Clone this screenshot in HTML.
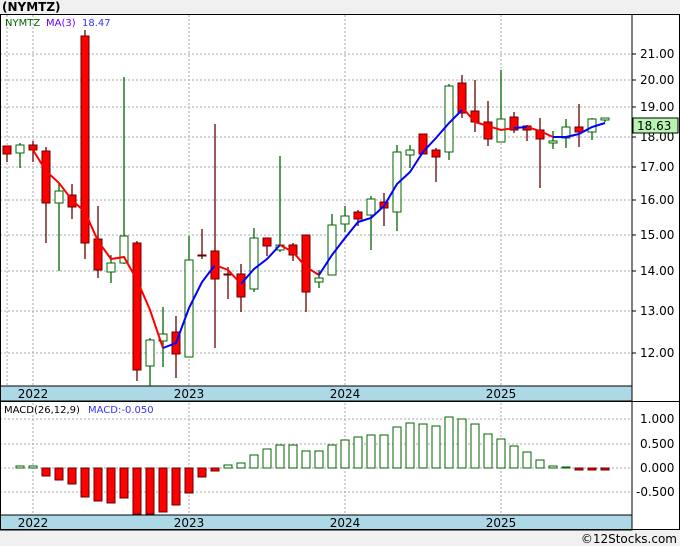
<!DOCTYPE html><html><head><style>
body{margin:0;width:680px;height:546px;background:#fff;font-family:"DejaVu Sans","Liberation Sans",sans-serif;overflow:hidden}
</style></head><body>
<svg width="680" height="546" xmlns="http://www.w3.org/2000/svg" font-family="DejaVu Sans, Liberation Sans, sans-serif">
<rect x="0" y="0" width="680" height="546" fill="#fff"/>
<rect x="0" y="0" width="680" height="14" fill="#f0f0f0"/>
<text x="2" y="11" font-size="12" font-weight="bold" fill="#000">(NYMTZ)</text>
<rect x="0" y="530" width="680" height="16" fill="#f0f0f0"/>
<text x="677" y="543" font-size="12" text-anchor="end" fill="#000">©12Stocks.com</text>
<!-- grids -->
<g stroke="#aaa" stroke-dasharray="2,2" stroke-width="1">
<line x1="0" x2="632" y1="54" y2="54"/><line x1="0" x2="632" y1="80" y2="80"/><line x1="0" x2="632" y1="107" y2="107"/><line x1="0" x2="632" y1="137" y2="137"/><line x1="0" x2="632" y1="167" y2="167"/><line x1="0" x2="632" y1="200" y2="200"/><line x1="0" x2="632" y1="235" y2="235"/><line x1="0" x2="632" y1="271" y2="271"/><line x1="0" x2="632" y1="311" y2="311"/><line x1="0" x2="632" y1="353" y2="353"/>
<line x1="7" x2="7" y1="15" y2="386"/><line x1="33" x2="33" y1="15" y2="386"/><line x1="189" x2="189" y1="15" y2="386"/><line x1="345" x2="345" y1="15" y2="386"/><line x1="501" x2="501" y1="15" y2="386"/>
<line x1="0" x2="632" y1="419" y2="419"/><line x1="0" x2="632" y1="444" y2="444"/><line x1="0" x2="632" y1="468" y2="468"/><line x1="0" x2="632" y1="492" y2="492"/>
<line x1="33" x2="33" y1="403" y2="515"/><line x1="189" x2="189" y1="403" y2="515"/><line x1="345" x2="345" y1="403" y2="515"/><line x1="501" x2="501" y1="403" y2="515"/>
</g>
<!-- date bands -->
<rect x="0" y="386" width="632" height="15" fill="#add8e6" stroke="#000"/>
<rect x="0" y="515" width="632" height="15" fill="#add8e6" stroke="#000"/>
<g font-size="12" text-anchor="middle" fill="#000">
<text x="33" y="398">2022</text><text x="189" y="398">2023</text><text x="345" y="398">2024</text><text x="501" y="398">2025</text>
<text x="33" y="527">2022</text><text x="189" y="527">2023</text><text x="345" y="527">2024</text><text x="501" y="527">2025</text>
</g>
<!-- frames -->
<rect x="0.5" y="14.5" width="679" height="515" fill="none" stroke="#000"/>
<line x1="632" x2="632" y1="14" y2="530" stroke="#000"/>
<line x1="0" x2="680" y1="401.5" y2="401.5" stroke="#000"/>
<!-- axis labels -->
<g font-size="12" fill="#000">
<text x="640" y="58">21.00</text><text x="640" y="84">20.00</text><text x="640" y="111">19.00</text><text x="640" y="141">18.00</text><text x="640" y="171">17.00</text><text x="640" y="204">16.00</text><text x="640" y="239">15.00</text><text x="640" y="275">14.00</text><text x="640" y="315">13.00</text><text x="640" y="357">12.00</text>
<text x="640" y="423">1.000</text><text x="640" y="448">0.500</text><text x="640" y="472">0.000</text><text x="636" y="496">-0.500</text>
</g>
<g stroke="#000"><line x1="632" x2="636" y1="54" y2="54"/><line x1="632" x2="636" y1="80" y2="80"/><line x1="632" x2="636" y1="107" y2="107"/><line x1="632" x2="636" y1="137" y2="137"/><line x1="632" x2="636" y1="167" y2="167"/><line x1="632" x2="636" y1="200" y2="200"/><line x1="632" x2="636" y1="235" y2="235"/><line x1="632" x2="636" y1="271" y2="271"/><line x1="632" x2="636" y1="311" y2="311"/><line x1="632" x2="636" y1="353" y2="353"/></g>
<rect x="633" y="118" width="45" height="15" fill="#b8f5b0" stroke="#000"/>
<text x="637" y="130" font-size="12">18.63</text>
<text x="5" y="26" font-size="10" fill="#006400">NYMTZ</text>
<text x="46" y="26" font-size="10" fill="#6600ff">MA(3)</text>
<text x="82" y="26" font-size="10" fill="#3333ff">18.47</text>
<text x="4" y="413" font-size="10" fill="#000">MACD(26,12,9)</text>
<text x="88" y="413" font-size="10" fill="#3333ff">MACD:-0.050</text>
<!-- wicks -->
<g stroke-width="1.3">
<g stroke="#600">
<line x1="7" x2="7" y1="146" y2="162"/><line x1="33" x2="33" y1="141" y2="162"/><line x1="46" x2="46" y1="147" y2="243"/><line x1="72" x2="72" y1="184" y2="219"/><line x1="85" x2="85" y1="30" y2="259"/><line x1="98" x2="98" y1="206" y2="278"/><line x1="137" x2="137" y1="241" y2="381"/><line x1="176" x2="176" y1="316" y2="378"/><line x1="202" x2="202" y1="229" y2="259"/><line x1="215" x2="215" y1="124" y2="348"/><line x1="228" x2="228" y1="267" y2="299"/><line x1="241" x2="241" y1="264" y2="312"/><line x1="267" x2="267" y1="238" y2="256"/><line x1="293" x2="293" y1="243" y2="261"/><line x1="306" x2="306" y1="235" y2="312"/><line x1="358" x2="358" y1="210" y2="226"/><line x1="384" x2="384" y1="193" y2="226"/><line x1="436" x2="436" y1="148" y2="182"/><line x1="462" x2="462" y1="75" y2="118"/><line x1="475" x2="475" y1="80" y2="132"/><line x1="488" x2="488" y1="101" y2="146"/><line x1="514" x2="514" y1="112" y2="133"/><line x1="527" x2="527" y1="125" y2="141"/><line x1="540" x2="540" y1="118" y2="188"/><line x1="579" x2="579" y1="104" y2="147"/>
</g>
<g stroke="#006400">
<line x1="20" x2="20" y1="143" y2="168"/><line x1="59" x2="59" y1="183" y2="271"/><line x1="111" x2="111" y1="255" y2="283"/><line x1="124" x2="124" y1="77" y2="264"/><line x1="150" x2="150" y1="338" y2="386"/><line x1="163" x2="163" y1="307" y2="367"/><line x1="189" x2="189" y1="236" y2="357"/><line x1="254" x2="254" y1="228" y2="292"/><line x1="280" x2="280" y1="156" y2="252"/><line x1="319" x2="319" y1="270" y2="288"/><line x1="332" x2="332" y1="214" y2="275"/><line x1="345" x2="345" y1="206" y2="232"/><line x1="371" x2="371" y1="196" y2="250"/><line x1="397" x2="397" y1="145" y2="231"/><line x1="410" x2="410" y1="145" y2="168"/><line x1="449" x2="449" y1="84" y2="160"/><line x1="501" x2="501" y1="70" y2="142"/><line x1="553" x2="553" y1="131" y2="149"/><line x1="566" x2="566" y1="119" y2="148"/><line x1="592" x2="592" y1="118" y2="140"/><line x1="605" x2="605" y1="118" y2="122"/>
</g></g>
<!-- bodies -->
<g fill="#f00" stroke="#600" stroke-width="1">
<rect x="3" y="146" width="8" height="8"/><rect x="29" y="145" width="8" height="5"/><rect x="42" y="151" width="8" height="52"/><rect x="68" y="195" width="8" height="12"/><rect x="81" y="36" width="8" height="207"/><rect x="94" y="239" width="8" height="31"/><rect x="133" y="243" width="8" height="127"/><rect x="172" y="332" width="8" height="22"/><rect x="198" y="255" width="8" height="1"/><rect x="211" y="251" width="8" height="28"/><rect x="224" y="274" width="8" height="1"/><rect x="237" y="274" width="8" height="23"/><rect x="263" y="238" width="8" height="8"/><rect x="289" y="245" width="8" height="10"/><rect x="302" y="235" width="8" height="57"/><rect x="354" y="212" width="8" height="7"/><rect x="380" y="202" width="8" height="6"/><rect x="419" y="134" width="8" height="20"/><rect x="432" y="150" width="8" height="7"/><rect x="458" y="83" width="8" height="30"/><rect x="471" y="111" width="8" height="11"/><rect x="484" y="122" width="8" height="17"/><rect x="510" y="117" width="8" height="13"/><rect x="523" y="126" width="8" height="4"/><rect x="536" y="130" width="8" height="9"/><rect x="575" y="127" width="8" height="5"/>
</g>
<g fill="#fff" stroke="#006400" stroke-width="1">
<rect x="16" y="145" width="8" height="8"/><rect x="55" y="191" width="8" height="12"/><rect x="107" y="263" width="8" height="9"/><rect x="120" y="236" width="8" height="27"/><rect x="146" y="340" width="8" height="26"/><rect x="159" y="334" width="8" height="7"/><rect x="185" y="260" width="8" height="97"/><rect x="250" y="238" width="8" height="51"/><rect x="276" y="245" width="8" height="5"/><rect x="315" y="278" width="8" height="4"/><rect x="328" y="225" width="8" height="50"/><rect x="341" y="216" width="8" height="8"/><rect x="367" y="199" width="8" height="16"/><rect x="393" y="152" width="8" height="60"/><rect x="406" y="150" width="8" height="5"/><rect x="445" y="86" width="8" height="66"/><rect x="497" y="119" width="8" height="23"/><rect x="549" y="141" width="8" height="2"/><rect x="562" y="127" width="8" height="11"/><rect x="588" y="119" width="8" height="13"/><rect x="601" y="118" width="8" height="2"/>
</g>
<!-- MA -->
<g fill="none" stroke-width="2">
<polyline stroke="#f00" points="33,150 46,171 59,183 72,200 85,212 98,241 111,259 124,257 137,280 150,310 163,348"/>
<polyline stroke="#00f" points="163,348 176,343 189,308 202,282 215,265"/>
<polyline stroke="#f00" points="215,265 228,270 241,284"/>
<polyline stroke="#00f" points="241,284 254,269 267,259 280,245"/>
<polyline stroke="#f00" points="280,245 293,252 306,267 319,275"/>
<polyline stroke="#00f" points="319,275 332,255 345,238 358,222 371,218 384,206 397,184 410,172 423,152 436,138 449,123 462,110"/>
<polyline stroke="#f00" points="462,107 475,122 488,126 501,130 514,128"/>
<polyline stroke="#00f" points="514,128 527,127"/>
<polyline stroke="#f00" points="527,127 540,131 553,137"/>
<polyline stroke="#00f" points="553,137 566,137 579,134 592,127 605,123"/>
</g>
<!-- MACD bars -->
<g fill="#fff" stroke="#006400">
<rect x="16" y="466" width="8" height="2"/><rect x="29" y="466" width="8" height="2"/><rect x="224" y="465" width="8" height="3"/><rect x="237" y="463" width="8" height="5"/><rect x="250" y="455" width="8" height="13"/><rect x="263" y="449" width="8" height="19"/><rect x="276" y="445" width="8" height="23"/><rect x="289" y="445" width="8" height="23"/><rect x="302" y="451" width="8" height="17"/><rect x="315" y="451" width="8" height="17"/><rect x="328" y="445" width="8" height="23"/><rect x="341" y="440" width="8" height="28"/><rect x="354" y="437" width="8" height="31"/><rect x="367" y="435" width="8" height="33"/><rect x="380" y="435" width="8" height="33"/><rect x="393" y="427" width="8" height="41"/><rect x="406" y="423" width="8" height="45"/><rect x="419" y="424" width="8" height="44"/><rect x="432" y="426" width="8" height="42"/><rect x="445" y="417" width="8" height="51"/><rect x="458" y="419" width="8" height="49"/><rect x="471" y="424" width="8" height="44"/><rect x="484" y="434" width="8" height="34"/><rect x="497" y="439" width="8" height="29"/><rect x="510" y="446" width="8" height="22"/><rect x="523" y="452" width="8" height="16"/><rect x="536" y="460" width="8" height="8"/><rect x="549" y="466" width="8" height="2"/><rect x="562" y="467" width="8" height="1"/>
</g>
<g fill="#f00" stroke="#600">
<rect x="42" y="468" width="8" height="8"/><rect x="55" y="468" width="8" height="12"/><rect x="68" y="468" width="8" height="16"/><rect x="81" y="468" width="8" height="29"/><rect x="94" y="468" width="8" height="33"/><rect x="107" y="468" width="8" height="35"/><rect x="120" y="468" width="8" height="30"/><rect x="133" y="468" width="8" height="46"/><rect x="146" y="468" width="8" height="46"/><rect x="159" y="468" width="8" height="44"/><rect x="172" y="468" width="8" height="37"/><rect x="185" y="468" width="8" height="25"/><rect x="198" y="468" width="8" height="9"/><rect x="211" y="468" width="8" height="3"/><rect x="575" y="468" width="8" height="2"/><rect x="588" y="468" width="8" height="2"/><rect x="601" y="468" width="8" height="2"/>
</g>
</svg>
</body></html>
